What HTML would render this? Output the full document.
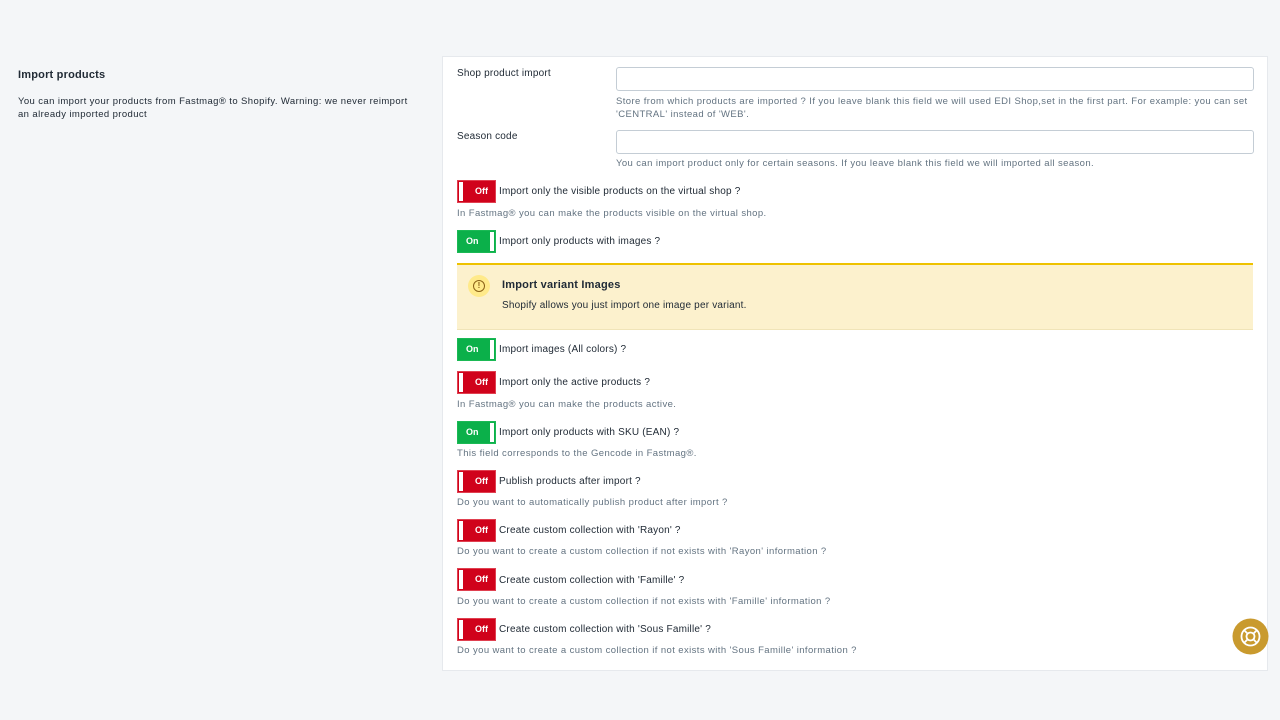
<!DOCTYPE html>
<html><head><style>
body{margin:0;width:1280px;height:720px;background:#f4f6f8;font-family:"Liberation Sans",sans-serif;position:relative;overflow:hidden;color:#212b36}
.a{position:absolute;white-space:nowrap;letter-spacing:0.4px}
.t{font-size:10px;color:#212b36;letter-spacing:0.2px}
.h{font-size:9.5px;color:#637381}
.card{position:absolute;left:443px;top:57px;width:824px;height:613px;background:#fff;box-shadow:0 0 0 1px #e6e9ed}
.in{position:absolute;left:616px;width:636px;height:22px;border:1px solid #c4cdd5;border-radius:3px;background:#fff}
.tg{position:absolute;left:457px;width:39px;height:23px;box-sizing:border-box;font-size:9px;font-weight:bold;color:#fff;line-height:21px;letter-spacing:0}
.off{background:#d0021b;border:1px solid #e04050}
.off::before{content:"";position:absolute;left:1px;top:1px;width:4px;height:19px;background:#fff}
.off span{position:absolute;left:17px}
.on{background:#0bb04a;border:1px solid #1bb955}
.on::after{content:"";position:absolute;right:1px;top:1px;width:4px;height:19px;background:#fff}
.on span{position:absolute;left:8px}
</style></head><body>
<div class="a" style="left:18px;top:69px;font-size:11px;font-weight:bold;letter-spacing:0.2px">Import products</div>
<div class="a" style="left:18px;top:95px;font-size:9.5px;line-height:13px;color:#212b36">You can import your products from Fastmag® to Shopify. Warning: we never reimport<br>an already imported product</div>
<div class="card"></div>
<div class="a t" style="left:457px;top:68px">Shop product import</div>
<div class="in" style="top:67px"></div>
<div class="a h" style="left:616px;top:95px;line-height:13px">Store from which products are imported ? If you leave blank this field we will used EDI Shop,set in the first part. For example: you can set<br>'CENTRAL' instead of 'WEB'.</div>
<div class="a t" style="left:457px;top:131px">Season code</div>
<div class="in" style="top:130px"></div>
<div class="a h" style="left:616px;top:158px">You can import product only for certain seasons. If you leave blank this field we will imported all season.</div>

<div class="tg off" style="top:180px"><span>Off</span></div><div class="a t" style="left:499px;top:186px">Import only the visible products on the virtual shop ?</div>
<div class="a h" style="left:457px;top:208px">In Fastmag® you can make the products visible on the virtual shop.</div>
<div class="tg on" style="top:230px"><span>On</span></div><div class="a t" style="left:499px;top:236px">Import only products with images ?</div>

<div class="a" style="left:457px;top:263px;width:796px;height:64px;background:#fcf1cd;border-top:2px solid #eec200;border-bottom:1px solid #f0e4b8"></div>
<div class="a" style="left:468px;top:275px;width:22px;height:22px;border-radius:50%;background:#ffea8a"></div>
<div class="a" style="left:473px;top:280px;width:10px;height:10px;border:1.5px solid #8a6116;border-radius:50%;font-size:8px;font-weight:bold;color:#8a6116;text-align:center;line-height:10px;letter-spacing:0">!</div>
<div class="a" style="left:502px;top:279px;font-size:11px;font-weight:bold;color:#212b36;letter-spacing:0.2px">Import variant Images</div>
<div class="a t" style="left:502px;top:300px">Shopify allows you just import one image per variant.</div>

<div class="tg on" style="top:338px"><span>On</span></div><div class="a t" style="left:499px;top:344px">Import images (All colors) ?</div>
<div class="tg off" style="top:371px"><span>Off</span></div><div class="a t" style="left:499px;top:377px">Import only the active products ?</div>
<div class="a h" style="left:457px;top:399px">In Fastmag® you can make the products active.</div>
<div class="tg on" style="top:421px"><span>On</span></div><div class="a t" style="left:499px;top:427px">Import only products with SKU (EAN) ?</div>
<div class="a h" style="left:457px;top:448px">This field corresponds to the Gencode in Fastmag®.</div>
<div class="tg off" style="top:470px"><span>Off</span></div><div class="a t" style="left:499px;top:476px">Publish products after import ?</div>
<div class="a h" style="left:457px;top:497px">Do you want to automatically publish product after import ?</div>
<div class="tg off" style="top:519px"><span>Off</span></div><div class="a t" style="left:499px;top:525px">Create custom collection with 'Rayon' ?</div>
<div class="a h" style="left:457px;top:546px">Do you want to create a custom collection if not exists with 'Rayon' information ?</div>
<div class="tg off" style="top:568px"><span>Off</span></div><div class="a t" style="left:499px;top:575px">Create custom collection with 'Famille' ?</div>
<div class="a h" style="left:457px;top:596px">Do you want to create a custom collection if not exists with 'Famille' information ?</div>
<div class="tg off" style="top:618px"><span>Off</span></div><div class="a t" style="left:499px;top:624px">Create custom collection with 'Sous Famille' ?</div>
<div class="a h" style="left:457px;top:645px">Do you want to create a custom collection if not exists with 'Sous Famille' information ?</div>

<svg class="a" style="left:1232px;top:618px" width="37" height="37" viewBox="0 0 37 37">
<circle cx="18.5" cy="18.5" r="18" fill="#c99a2e"/>
<g fill="none" stroke="#fff" stroke-width="1.8">
<circle cx="18.5" cy="18.5" r="9"/><circle cx="18.5" cy="18.5" r="4"/>
<path d="M12.2 12.2l3.5 3.5M24.8 12.2l-3.5 3.5M12.2 24.8l3.5-3.5M24.8 24.8l-3.5-3.5"/>
</g></svg>
</body></html>
